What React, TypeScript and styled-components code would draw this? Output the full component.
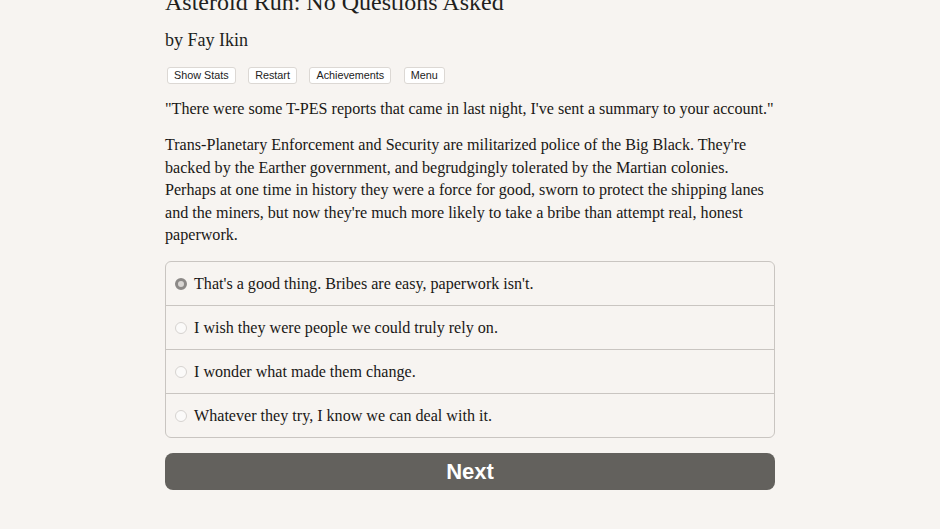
import React, { useState } from 'react';
import styled, { createGlobalStyle } from 'styled-components';

const GlobalStyle = createGlobalStyle`
  html, body {
    margin: 0;
    padding: 0;
    background-color: #f7f4f1;
  }
  body {
    font-family: 'Liberation Serif', 'Times New Roman', serif;
    color: #1d1b19;
  }
`;

const choices = [
  "That's a good thing. Bribes are easy, paperwork isn't.",
  'I wish they were people we could truly rely on.',
  'I wonder what made them change.',
  'Whatever they try, I know we can deal with it.',
];

const buttons = ['Show Stats', 'Restart', 'Achievements', 'Menu'];

const App: React.FC = () => {
  const [selected, setSelected] = useState(0);

  return (
    <>
      <GlobalStyle />
      <Page>
        <Title>Asteroid Run: No Questions Asked</Title>
        <Author>by Fay Ikin</Author>
        <ButtonRow>
          {buttons.map((label) => (
            <SmallButton key={label}>{label}</SmallButton>
          ))}
        </ButtonRow>
        <Paragraph>
          "There were some T-PES reports that came in last night, I've sent a
          summary to your account."
        </Paragraph>
        <Paragraph>
          Trans-Planetary Enforcement and Security are militarized police of the
          Big Black. They're backed by the Earther government, and begrudgingly
          tolerated by the Martian colonies. Perhaps at one time in history they
          were a force for good, sworn to protect the shipping lanes and the
          miners, but now they're much more likely to take a bribe than attempt
          real, honest paperwork.
        </Paragraph>
        <ChoiceList>
          {choices.map((text, i) => (
            <ChoiceRow key={text} onClick={() => setSelected(i)}>
              <Radio checked={selected === i} />
              <ChoiceText>{text}</ChoiceText>
            </ChoiceRow>
          ))}
        </ChoiceList>
        <NextButton>Next</NextButton>
      </Page>
    </>
  );
};

const Page = styled.div`
  width: 610px;
  margin: 0 auto;
  display: flex;
  flex-direction: column;
`;

const Title = styled.h1`
  margin: -13px 0 0;
  font-size: 24px;
  font-weight: normal;
  line-height: 30px;
  color: #221f1d;
`;

const Author = styled.h2`
  margin: 11px 0 0;
  font-size: 18px;
  font-weight: normal;
  line-height: 24px;
  color: #221f1d;
`;

const ButtonRow = styled.div`
  display: flex;
  gap: 12.5px;
  margin: 15px 0 0 2px;
`;

const SmallButton = styled.button`
  font-family: 'Liberation Sans', Arial, sans-serif;
  font-size: 10.8px;
  line-height: 13px;
  color: #222;
  background-color: #ffffff;
  border: 1px solid #dcd8d4;
  border-radius: 3px;
  padding: 1px 6px;
  cursor: pointer;
`;

const Paragraph = styled.p`
  margin: 14px 0 0;
  font-size: 16.1px;
  line-height: 22.4px;
  color: #1a1816;
`;

const ChoiceList = styled.div`
  margin-top: 15px;
  border: 1px solid #c9c5c1;
  border-radius: 6px;
  overflow: hidden;
`;

const ChoiceRow = styled.label`
  display: flex;
  align-items: center;
  height: 43px;
  padding-left: 9px;
  cursor: pointer;

  & + & {
    border-top: 1px solid #c9c5c1;
  }
`;

const Radio = styled.span<{ checked: boolean }>`
  width: 12px;
  height: 12px;
  border-radius: 50%;
  box-sizing: border-box;
  margin-right: 7px;
  background-color: ${({ checked }) => (checked ? '#d9d6d3' : '#fbfaf9')};
  border: ${({ checked }) =>
    checked ? '3.5px solid #8c8987' : '1px solid #d6d3d0'};
`;

const ChoiceText = styled.span`
  font-size: 16.1px;
  color: #1a1816;
`;

const NextButton = styled.button`
  margin-top: 15px;
  height: 37px;
  border: none;
  border-radius: 8px;
  background-color: #63615d;
  color: #ffffff;
  font-family: 'Liberation Sans', Arial, sans-serif;
  font-weight: bold;
  font-size: 22px;
  cursor: pointer;
`;

export default App;
